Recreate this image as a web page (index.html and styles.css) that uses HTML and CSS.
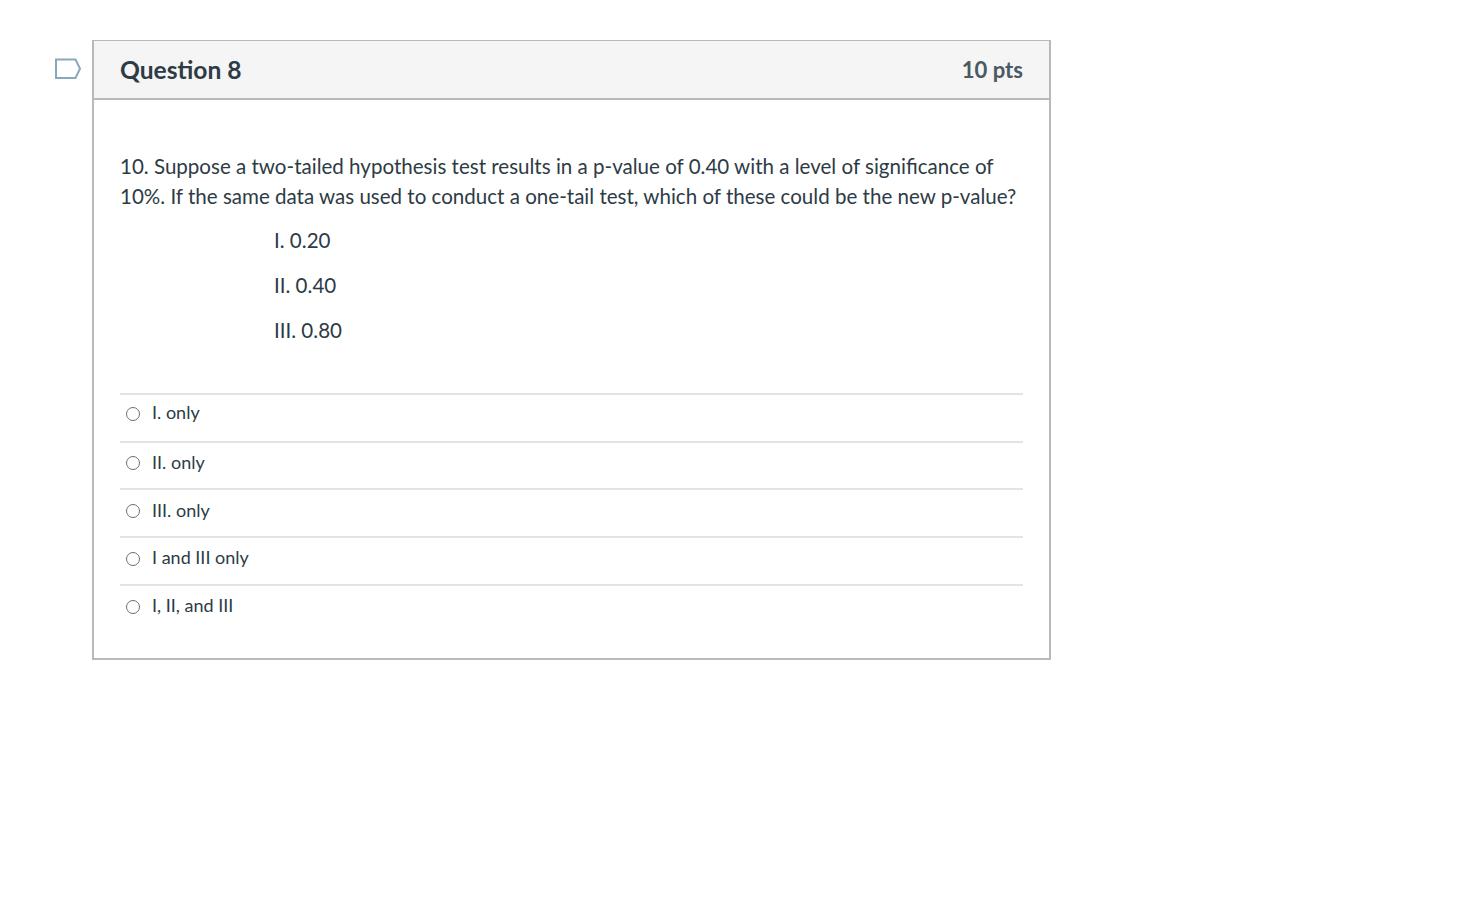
FILE: index.html
```html
<!DOCTYPE html>
<html lang="en">
<head>
<meta charset="utf-8">
<title>Question 8</title>
<link rel="stylesheet" href="styles.css">
</head>
<body>
<div class="page">
  <svg class="flag" width="28" height="23" viewBox="0 0 28 23" aria-hidden="true"><path class="flag-path" d="M2 2.5H21.5L26 11.75L21.5 21H2Z"/></svg>
  <section class="card">
    <header class="head">
      <h2 class="title">Question 8</h2>
      <span class="pts">10 pts</span>
    </header>
    <div class="body">
      <div class="text">
        <p class="stem">10. Suppose a two-tailed hypothesis test results in a p-value of 0.40 with a level of significance of 10%. If the same data was used to conduct a one-tail test, which of these could be the new p-value?</p>
        <p class="item">I. 0.20</p>
        <p class="item">II. 0.40</p>
        <p class="item">III. 0.80</p>
      </div>
      <div class="answers">
        <div class="answer answer-first"><span class="radio"></span><span>I. only</span></div>
        <div class="answer"><span class="radio"></span><span>II. only</span></div>
        <div class="answer"><span class="radio"></span><span>III. only</span></div>
        <div class="answer"><span class="radio"></span><span>I and III only</span></div>
        <div class="answer"><span class="radio"></span><span>I, II, and III</span></div>
      </div>
    </div>
  </section>
</div>
</body>
</html>
```
FILE: styles.css
```css
* { box-sizing: border-box; }
html, body { margin: 0; padding: 0; background: #fff; }
body { font-family: Lato, "Open Sans", sans-serif; color: #2d3b45; }
.page { display: flex; align-items: flex-start; padding: 40px 0 0 54px; }
.flag { flex: none; margin: 17px 10px 0 0; }
.flag-path { fill: none; stroke: #8aa8bd; stroke-width: 2; }
.card { width: 959px; height: 620px; border: 2px solid #b9b9b9; border-width: 1.5px 2px 2px 2px; display: flex; flex-direction: column; }
.head { height: 59px; flex: none; display: flex; justify-content: space-between; align-items: center; padding: 0 26px; background: #f5f5f5; border-bottom: 2px solid #b9b9b9; }
.title { margin: 0; font-size: 24.6px; font-weight: 700; color: #2d3b45; }
.pts { font-size: 22.1px; font-weight: 700; color: #4b5961; }
.body { padding: 51px 26px 0; }
.text { font-size: 20.55px; line-height: 30px; }
.stem { margin: 0 0 14px; }
.item { margin: 0 0 15px 154px; }
.answers { margin-top: 47.8px; }
.answer { display: flex; align-items: center; gap: 12px; height: 47.8px; border-top: 2px solid #e3e3e3; padding: 0 0 7.4px 6px; font-size: 18px; }
.answer-first { padding-bottom: 11px; }
.radio { width: 14px; height: 14px; border: 1.5px solid #6f6f6f; border-radius: 50%; flex: none; margin-top: 3px; }
```
